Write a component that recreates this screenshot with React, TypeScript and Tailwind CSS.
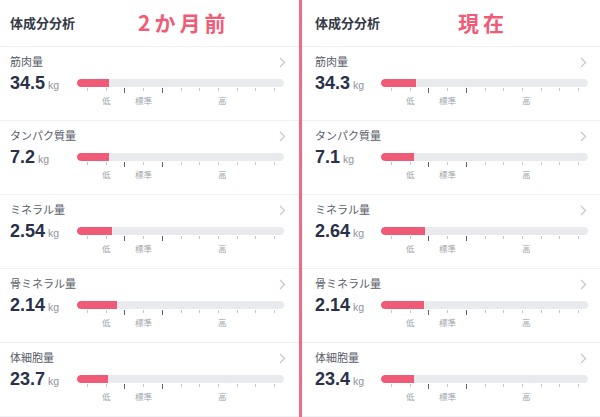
const ticks = [10, 29, 47, 66, 85, 104, 122, 141, 160, 178, 197];

type Item = { name: string; value: string; fill: number };

const before: Item[] = [
  { name: "筋肉量", value: "34.5", fill: 32 },
  { name: "タンパク質量", value: "7.2", fill: 32 },
  { name: "ミネラル量", value: "2.54", fill: 35 },
  { name: "骨ミネラル量", value: "2.14", fill: 40 },
  { name: "体細胞量", value: "23.7", fill: 31 },
];

const now: Item[] = [
  { name: "筋肉量", value: "34.3", fill: 35 },
  { name: "タンパク質量", value: "7.1", fill: 33 },
  { name: "ミネラル量", value: "2.64", fill: 44 },
  { name: "骨ミネラル量", value: "2.14", fill: 43 },
  { name: "体細胞量", value: "23.4", fill: 33 },
];

const jp = "font-['Noto_Sans_CJK_JP','Noto_Sans',sans-serif]";

function Scale({ fill }: { fill: number }) {
  return (
    <div className="w-[207px]">
      <div className="h-[8px] rounded-full bg-[#e8eaee] overflow-hidden">
        <div className="h-full rounded-l-full bg-[#ef5a76]" style={{ width: fill }} />
      </div>
      <svg width="207" height="6" className="block">
        {ticks.map((x, i) => (
          <line
            key={x}
            x1={x + 0.5}
            x2={x + 0.5}
            y1={1}
            y2={i === 2 || i === 4 ? 6 : 4}
            stroke={i === 2 || i === 4 ? "#5b6270" : "#c3c7ce"}
            strokeWidth={1}
          />
        ))}
      </svg>
      <div className={`relative h-[13px] text-[8.5px] leading-[13px] text-[#a0a5ad] ${jp}`}>
        <span className="absolute left-[25px] top-[1px]">低</span>
        <span className="absolute left-[58px] top-[1px]">標準</span>
        <span className="absolute left-[141px] top-[1px]">高</span>
      </div>
    </div>
  );
}

function Row({ item, pad, valW }: { item: Item; pad: string; valW: string }) {
  return (
    <div className={`h-[74px] border-b border-[#eef0f3] ${pad} pt-[7px]`}>
      <div className="flex items-center justify-between pr-[13px]">
        <span className={`text-[11px] leading-[14px] text-[#5a606a] ${jp}`}>{item.name}</span>
        <svg width="7" height="11" viewBox="0 0 7 11" className="mt-[3px]">
          <path d="M1 1l4.5 4.5L1 10" fill="none" stroke="#c4c7cc" strokeWidth="1.2" />
        </svg>
      </div>
      <div className="flex items-start mt-[4px]">
        <div className={`${valW} flex items-baseline pt-[1px]`}>
          <span className="font-['Liberation_Sans',sans-serif] font-bold text-[18px] leading-[20px] text-[#283149]">
            {item.value}
          </span>
          <span className="ml-[3px] font-['Liberation_Sans',sans-serif] text-[10.5px] text-[#8d939b]">kg</span>
        </div>
        <div className="mt-[7px]">
          <Scale fill={item.fill} />
        </div>
      </div>
    </div>
  );
}

function Panel({
  items,
  tag,
  pad,
  tagPad,
  valW,
  width,
}: {
  items: Item[];
  tag: string;
  pad: string;
  tagPad: string;
  valW: string;
  width: string;
}) {
  return (
    <div className={`${width} bg-white`}>
      <div className={`h-[47px] border-b border-[#eef0f3] flex items-center ${pad}`}>
        <span className={`text-[13px] font-bold text-[#343a46] ${jp}`}>体成分分析</span>
        <span className={`${tagPad} text-[21px] font-semibold tracking-[4px] text-[#f05c78] ${jp}`}>{tag}</span>
      </div>
      {items.map((it) => (
        <Row key={it.name} item={it} pad={pad} valW={valW} />
      ))}
    </div>
  );
}

export default function App() {
  return (
    <div className="w-[600px] h-[417px] overflow-hidden flex bg-white">
      <Panel items={before} tag="2か月前" pad="pl-[10px]" tagPad="ml-[63px]" valW="w-[67px]" width="w-[299px]" />
      <div className="w-[3px] bg-[#f26a84]" />
      <Panel items={now} tag="現在" pad="pl-[13px]" tagPad="ml-[78px]" valW="w-[66px]" width="w-[298px]" />
    </div>
  );
}
